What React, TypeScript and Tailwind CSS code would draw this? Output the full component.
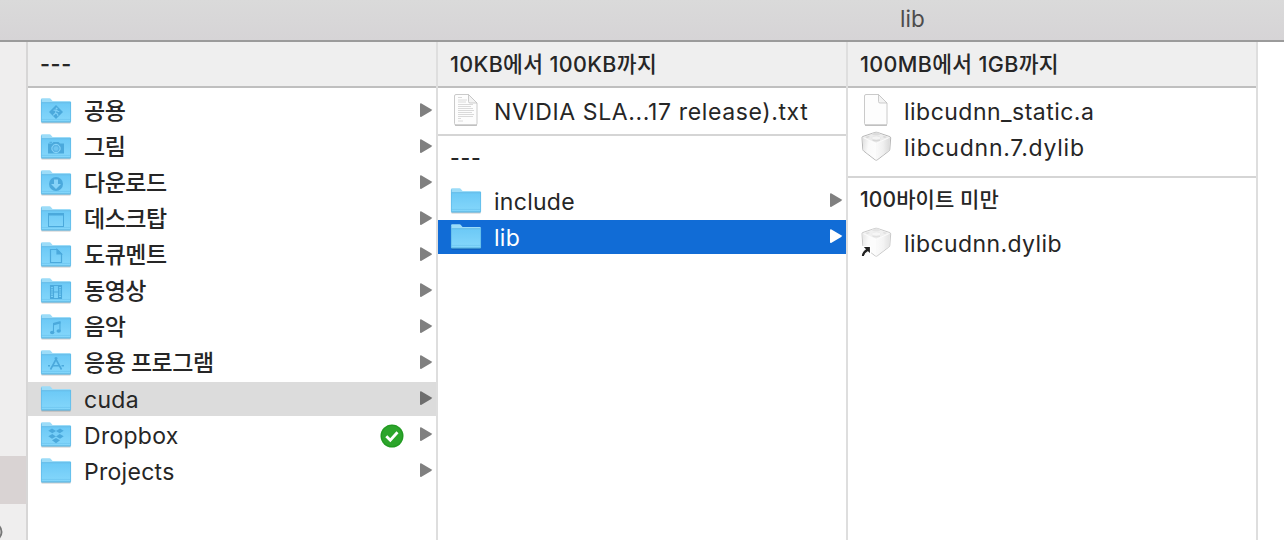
import React from 'react';

type Glyph =
  | 'public' | 'pictures' | 'downloads' | 'desktop' | 'documents'
  | 'movies' | 'music' | 'apps' | 'dropbox' | 'none';

const INK = '#4ba9dc';

function FolderGlyph({ kind }: { kind: Glyph }) {
  switch (kind) {
    case 'public':
      return (
        <g>
          <path d="M15 7l7 7-7 7-7-7z" fill={INK} />
          <circle cx="15.6" cy="10.6" r="1" fill="#7fd0f7" />
          <path d="M12.5 12.3l2.5-.3 2 1.2 1.3.6M15 12.5l-.4 2.4 2 1.3.3 2M14.6 15l-2.4 2.4" stroke="#7fd0f7" strokeWidth="1.1" fill="none" />
        </g>
      );
    case 'pictures':
      return (
        <g>
          <path d="M7 9.500h4l1.500-1.500h5L19 9.500h4v10H7z" fill={INK} />
          <path d="M8.500 8.300h2.500" stroke={INK} />
          <circle cx="15" cy="14.500" r="4.200" fill="#5bb5e6" stroke="#8bd7fb" strokeWidth="1" />
          <circle cx="15" cy="14.500" r="2.200" fill="#6fc5f0" />
        </g>
      );
    case 'downloads':
      return (
        <g>
          <circle cx="15" cy="14" r="7" fill={INK} />
          <path d="M13 9.500h4v4.500h3l-5 5-5-5h3z" fill="#86d3f8" />
        </g>
      );
    case 'desktop':
      return (
        <g fill="none" stroke={INK}>
          <rect x="7.500" y="7.500" width="15" height="13" />
          <path d="M7 8.500h16" strokeWidth="2" />
        </g>
      );
    case 'documents':
      return (
        <g fill="none" stroke={INK} strokeWidth="1.200">
          <path d="M9.500 7.500h6.500l4.500 4.500v8.500h-11z" />
          <path d="M16 7.500v4.500h4.500z" fill={INK} />
        </g>
      );
    case 'movies':
      return (
        <g fill="none" stroke={INK}>
          <path d="M9.500 7.500h11v13h-11z M12.500 7.500v13M17.500 7.500v13M12.500 14h5" strokeWidth="1.100" />
          <path d="M11 8v12M19 8v12" strokeWidth="2.200" strokeDasharray="1 1.200" />
        </g>
      );
    case 'music':
      return (
        <g fill={INK}>
          <path d="M12 9l7.500-2v2.500L13 11.300v7h-1.100z" />
          <path d="M18.400 8h1.100v9h-1.100z" />
          <ellipse cx="11.200" cy="18.500" rx="2.200" ry="1.700" />
          <ellipse cx="17.700" cy="17" rx="2.200" ry="1.700" />
        </g>
      );
    case 'apps':
      return (
        <g fill="none" stroke={INK} strokeWidth="1.600">
          <path d="M14 7.500l6.500 12M16 7.500L9.500 19.500" />
          <path d="M7 15.700h2M11.500 15.700h6.500M20.500 15.700h2.500" />
        </g>
      );
    case 'dropbox':
      return (
        <g fill={INK}>
          <path d="M11 6.500l4 2.500-3.700 2.300L7.300 8.800z" />
          <path d="M19 6.500l-4 2.500 3.700 2.300 4-2.500z" />
          <path d="M11.300 11.900l3.700 2.500-4 2.300-3.700-2.500z" />
          <path d="M18.700 11.900L15 14.400l4 2.300 3.700-2.500z" />
          <path d="M15 16l4 2.300-4 2.900-4-2.900z" />
        </g>
      );
    default:
      return null;
  }
}

function Folder({ kind = 'none' }: { kind?: Glyph }) {
  return (
    <svg width="32" height="28" viewBox="-1 0 32 28" className="block">
      <defs>
        <linearGradient id="folderFace" x1="0" y1="0" x2="0" y2="1">
          <stop offset="0" stopColor="#6cc9f6" />
          <stop offset="1" stopColor="#85d7fb" />
        </linearGradient>
      </defs>
      <path d="M.5 24.900h29" stroke="#000" strokeOpacity=".18" strokeWidth="1.400" />
      <path d="M0 1.500Q0 .2 1.300.2h7.200q1 0 1.600 1l1 1.400q.4.500 1.200.5h16.400Q30 3.100 30 4.400V8H0z" fill="#9cdcf8" />
      <path d="M0 4.800h30v18.500q0 .9-1 .9H1q-1 0-1-.9z" fill="url(#folderFace)" />
      <path d="M.3 4.700h29.400" stroke="#5db8e6" strokeWidth=".9" />
      <path d="M.4 1.500v22M29.600 4v19.500" stroke="#5db8e6" strokeWidth=".7" />
      <path d="M.5 21.400h29" stroke="#62bfeb" strokeWidth=".5" />
      <path d="M.3 24h29.400" stroke="#4ba5d3" strokeWidth=".9" />
      <FolderGlyph kind={kind} />
    </svg>
  );
}

function Page({ text = false }: { text?: boolean }) {
  return (
    <svg width="26" height="34" viewBox="0 0 26 34" className="block">
      <path d="M1.500 2q0-1.500 1.500-1.500H15.500l8.500 8.500v20.500q0 1.500-1.500 1.500H3Q1.500 31 1.500 29.500z" fill="#fdfdfd" stroke="#c4c4c4" strokeWidth=".9" />
      <path d="M2 31.200h22" stroke="#a9a9a9" strokeWidth=".9" />
      <path d="M15.500 .5v7q0 1.500 1.500 1.500H24z" fill="#f3f3f3" stroke="#c0c0c0" strokeWidth=".8" />
      {text && (
        <g stroke="#d0d0d0" strokeWidth=".8">
          <path d="M5 3.500h4M5 6h9M5 8h8M5 10.500h15M5 12.500h13M5 14.500h15M5 16.500h16M5 18.500h14M5 20.500h16M5 22.500h15M5 24.500h3M5 27h5" />
        </g>
      )}
    </svg>
  );
}

function Brick({ alias = false }: { alias?: boolean }) {
  return (
    <svg width="32" height="34" viewBox="0 0 32 34" className="block">
      <defs>
        <linearGradient id="brickLeft" x1="0" y1="0" x2="1" y2=".3">
          <stop offset="0" stopColor="#dedede" />
          <stop offset=".5" stopColor="#fafafa" />
          <stop offset="1" stopColor="#fcfcfc" />
        </linearGradient>
        <linearGradient id="brickRight" x1="0" y1="0" x2="1" y2="0">
          <stop offset="0" stopColor="#fafafa" />
          <stop offset=".5" stopColor="#f0f0f0" />
          <stop offset="1" stopColor="#d9d9d9" />
        </linearGradient>
      </defs>
      <g opacity={alias ? 0.75 : 1}>
        <path d="M2.500 6.600L15 2.400q1.200-.3 2.400 0L29.800 6.600q1 .4.900 1.500l-.9 11.300q-.1 1-1 1.700L17.500 29.700q-1.300 1-2.600 0L3.800 21.100q-.9-.7-1-1.700L2 8.100q-.1-1.100.5-1.500z" fill="#eee" stroke="#b0b0b0" strokeWidth=".9" />
        <path d="M2.500 7.500L16.200 12.800V30L4.200 20.800q-.8-.6-.9-1.500z" fill="url(#brickLeft)" />
        <path d="M30 7.500L16.200 12.800V30L28.400 20.800q.8-.6.900-1.500z" fill="url(#brickRight)" />
        <path d="M2.800 7.200L16.200 2.700l13.500 4.500L16.200 13.200z" fill="#ececec" />
        <path d="M3.500 7.800L16.200 13.200l12.700-5.400" stroke="#fff" strokeOpacity=".7" strokeWidth="1" fill="none" />
        <path d="M5.500 7l3-1 1.500 1-3 1zM24 6l3 1-2 1-2.500-1zM12.500 7.800v3q3.700 1.500 7.500 0v-3z" fill="#d6d6d6" />
        <ellipse cx="16.200" cy="8" rx="4.600" ry="1.900" fill="#f4f4f4" stroke="#dcdcdc" strokeWidth=".5" />
        <ellipse cx="16.200" cy="3.900" rx="4.200" ry="1.400" fill="#dcdcdc" />
      </g>
      {alias && (
        <path d="M2.500 20.500h8v8l-2.600-2.600q-3 1.500-3.500 4.600H1.200q.2-4.800 3.900-7.300z" fill="#222" stroke="#fff" strokeWidth="1.200" />
      )}
    </svg>
  );
}

function Arrow({ className }: { className: string }) {
  return (
    <svg width="13" height="16" viewBox="0 0 13 16" className={`mr-[3px] mt-2 block shrink-0 ${className}`}>
      <path d="M0 2.300Q0 .8 1.500 1.500l9.700 5.700q1.400.9 0 1.900L1.500 14.800Q0 15.400 0 13.900z" fill="currentColor" />
    </svg>
  );
}

function SyncedBadge() {
  return (
    <svg width="24" height="24" viewBox="0 0 24 24" className="mr-4 mt-[6px] block shrink-0">
      <circle cx="12" cy="12" r="11.500" fill="#2ca52b" />
      <circle cx="12" cy="12" r="10.700" fill="none" stroke="#188b19" strokeOpacity=".55" strokeWidth="1" />
      <path d="M6.300 12.300l4 4 7.200-8" stroke="#fff" strokeWidth="2.800" fill="none" />
    </svg>
  );
}

interface RowProps {
  label: string;
  icon: React.ReactNode;
  tracking?: string;
  iconBox?: string;
  row?: string;
  arrow?: string;
  badge?: boolean;
}

function Row({ label, icon, tracking = 'tracking-[0.28px] leading-[36px]', iconBox = 'pl-[12px] pt-1', row = '', arrow, badge }: RowProps) {
  return (
    <li className={`mb-0.5 flex h-[34px] ${row}`}>
      <span className={`w-14 shrink-0 ${iconBox}`}>{icon}</span>
      <span className={`flex-1 whitespace-nowrap text-[23px] ${tracking}`}>{label}</span>
      {badge && <SyncedBadge />}
      {arrow && <Arrow className={arrow} />}
    </li>
  );
}

const KO = 'tracking-[-0.5px] leading-[35px] font-medium';

const home: RowProps[] = [
  { label: '공용', icon: <Folder kind="public" />, tracking: KO },
  { label: '그림', icon: <Folder kind="pictures" />, tracking: KO },
  { label: '다운로드', icon: <Folder kind="downloads" />, tracking: KO },
  { label: '데스크탑', icon: <Folder kind="desktop" />, tracking: KO },
  { label: '도큐멘트', icon: <Folder kind="documents" />, tracking: KO },
  { label: '동영상', icon: <Folder kind="movies" />, tracking: KO },
  { label: '음악', icon: <Folder kind="music" />, tracking: KO },
  { label: '응용 프로그램', icon: <Folder kind="apps" />, tracking: KO },
  { label: 'cuda', icon: <Folder />, row: 'bg-[#dcdcdc]', arrow: 'text-[#6e6e6e]' },
  { label: 'Dropbox', icon: <Folder kind="dropbox" />, badge: true },
  { label: 'Projects', icon: <Folder /> },
];

function Heading({ children }: { children: React.ReactNode }) {
  return (
    <h2 className="h-[46px] border-b-2 border-[#bfbfbf] bg-[#efefef] pl-3 text-[21.5px] font-medium leading-[45px] tracking-[0.35px] whitespace-nowrap">
      {children}
    </h2>
  );
}

function SubHeading({ children }: { children: React.ReactNode }) {
  return (
    <h3 className="h-[46px] border-t-2 border-[#d5d5d5] pl-3 text-[21px] font-[450] leading-[44px] tracking-[0.1px] whitespace-nowrap">
      {children}
    </h3>
  );
}

export default function App() {
  return (
    <div className="flex h-[540px] w-[1284px] flex-col overflow-hidden bg-white font-['Inter','Noto_Sans_CJK_KR',sans-serif] text-[#262626]">
      <header className="flex h-[42px] shrink-0 border-b-2 border-[#9b9b9b] bg-linear-to-b from-[#dadada] to-[#d6d4d6] pl-[900px]">
        <span className="text-[22.5px] leading-[37px] text-[#4c4c4c]">lib</span>
      </header>
      <main className="flex min-h-0 flex-1">
        <aside className="flex w-7 shrink-0 flex-col overflow-hidden border-r-2 border-[#d7d6d6] bg-[#efeeee]">
          <div className="mt-[414px] h-12 shrink-0 bg-[#d9d3d3]" />
          <svg width="3" height="20" viewBox="0 0 3 20" className="mt-[18px] block shrink-0">
            <circle cx="-7" cy="10" r="8.500" fill="none" stroke="#777" strokeWidth="2" />
          </svg>
        </aside>
        <section className="w-[410px] shrink-0 border-r-2 border-[#dedede]">
          <Heading><span className="font-semibold tracking-[0.6px]">---</span></Heading>
          <ul className="pt-1.5">
            {home.map((item) => (
              <Row key={item.label} arrow="text-[#808080]" {...item} />
            ))}
          </ul>
        </section>
        <section className="w-[410px] shrink-0 border-r-2 border-[#dedede]">
          <Heading>10KB에서 100KB까지</Heading>
          <ul className="h-[46px] pt-1.5">
            <Row label="NVIDIA SLA...17 release).txt" icon={<Page text />} iconBox="pl-[15px]" tracking="tracking-[0.62px] leading-[36px]" />
          </ul>
          <SubHeading><span className="tracking-[0.8px]">---</span></SubHeading>
          <ul className="pt-1">
            <Row label="include" icon={<Folder />} arrow="text-[#808080]" />
            <Row label="lib" icon={<Folder />} row="bg-[#116cd6] text-white" arrow="text-white" />
          </ul>
        </section>
        <section className="w-[410px] shrink-0 border-r-2 border-[#dedede]">
          <Heading>100MB에서 1GB까지</Heading>
          <ul className="h-[88px] pt-1.5">
            <Row label="libcudnn_static.a" icon={<Page />} iconBox="pl-[15px]" tracking="tracking-[0.48px] leading-[36px]" />
            <Row label="libcudnn.7.dylib" icon={<Brick />} iconBox="pl-[12px]" tracking="tracking-[0.75px] leading-[36px]" />
          </ul>
          <SubHeading>100바이트 미만</SubHeading>
          <ul className="pt-1">
            <Row label="libcudnn.dylib" icon={<Brick alias />} iconBox="pl-[12px]" tracking="tracking-[0.4px] leading-[36px]" />
          </ul>
        </section>
      </main>
    </div>
  );
}
